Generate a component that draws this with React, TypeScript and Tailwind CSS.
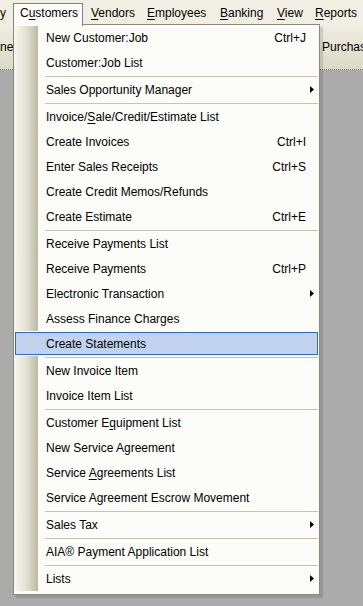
import React from 'react';

type Entry =
  | 'sep'
  | { label: React.ReactNode; shortcut?: string; sub?: boolean; active?: boolean };

const u = (s: string) => <span className="underline underline-offset-[2px]">{s}</span>;

const entries: Entry[] = [
  { label: 'New Customer:Job', shortcut: 'Ctrl+J' },
  { label: 'Customer:Job List' },
  'sep',
  { label: 'Sales Opportunity Manager', sub: true },
  'sep',
  { label: <>Invoice/{u('S')}ale/Credit/Estimate List</> },
  { label: 'Create Invoices', shortcut: 'Ctrl+I' },
  { label: 'Enter Sales Receipts', shortcut: 'Ctrl+S' },
  { label: 'Create Credit Memos/Refunds' },
  { label: 'Create Estimate', shortcut: 'Ctrl+E' },
  'sep',
  { label: 'Receive Payments List' },
  { label: 'Receive Payments', shortcut: 'Ctrl+P' },
  { label: 'Electronic Transaction', sub: true },
  { label: 'Assess Finance Charges' },
  { label: 'Create Statements', active: true },
  'sep',
  { label: 'New Invoice Item' },
  { label: 'Invoice Item List' },
  'sep',
  { label: <>Customer E{u('q')}uipment List</> },
  { label: 'New Service Agreement' },
  { label: <>Service {u('A')}greements List</> },
  { label: 'Service Agreement Escrow Movement' },
  'sep',
  { label: 'Sales Tax', sub: true },
  'sep',
  { label: 'AIA® Payment Application List' },
  'sep',
  { label: 'Lists', sub: true },
];

const strip = 'w-[24px] self-stretch shrink-0 bg-gradient-to-r from-[#f8f7f1] via-[#e4e2d3] to-[#bcb9a2]';

function Arrow() {
  return (
    <svg width="4" height="7" viewBox="0 0 4 7" className="mr-[5px] shrink-0">
      <polygon points="0,0 4,3.5 0,7" fill="#000" />
    </svg>
  );
}

function MenuRow({ entry }: { entry: Entry }) {
  if (entry === 'sep') {
    return (
      <div className="flex h-[2px]">
        <div className={strip} />
        <div className="flex-1 ml-[7px] mr-px pt-px">
          <div className="h-px bg-[#c5c2b2]" />
        </div>
      </div>
    );
  }
  if (entry.active) {
    return (
      <div className="h-[25px] px-px py-px">
        <div className="h-full flex items-center border border-[#316ac5] bg-[#c1d2ee] pl-[30px]">
          <span className="flex-1">{entry.label}</span>
        </div>
      </div>
    );
  }
  return (
    <div className="flex items-center h-[25px]">
      <div className={strip} />
      <span className="flex-1 pl-[8px] whitespace-nowrap">{entry.label}</span>
      {entry.shortcut && <span className="pr-[13px]">{entry.shortcut}</span>}
      {entry.sub && <Arrow />}
    </div>
  );
}

export default function App() {
  return (
    <div className="relative w-[363px] h-[606px] overflow-hidden bg-[#ababab] text-[12px] text-black font-['Liberation_Sans',Arial,sans-serif]">
      {/* menu bar */}
      <div className="flex h-[26px] bg-[#f1efe3] whitespace-nowrap">
        <span className="w-[13px] shrink-0 pt-[4px] overflow-hidden">y</span>
        <span className="relative z-10 shrink-0 mt-[3px] h-[23px] w-[70px] border border-b-0 border-[#85837a] bg-[#fcfcf9] pl-[6px]">
          C{u('u')}stomers
        </span>
        <span className="w-[57px] shrink-0 pl-[8px] pt-[4px]">{u('V')}endors</span>
        <span className="w-[72px] shrink-0 pl-[7px] pt-[4px]">{u('E')}mployees</span>
        <span className="w-[57px] shrink-0 pl-[8px] pt-[4px]">{u('B')}anking</span>
        <span className="w-[38px] shrink-0 pl-[8px] pt-[4px]">{u('V')}iew</span>
        <span className="w-[57px] shrink-0 pl-[8px] pt-[4px]">{u('R')}eports</span>
      </div>

      {/* toolbar */}
      <div className="flex h-[44px] pt-[12px] whitespace-nowrap bg-gradient-to-b from-[#efede1] to-[#dcd9c7] border-b border-dotted border-[#3a5fd0]">
        <span className="w-[322px] shrink-0">ner</span>
        <span className="shrink-0">Purchase</span>
      </div>

      {/* Customers dropdown */}
      <div className="absolute left-[13px] top-[24px] w-[307px] border border-[#8a877c] bg-[#fcfcf9] pb-[3px] shadow-[3px_3px_1px_rgba(0,0,0,0.12)]">
        {entries.map((e, i) => (
          <MenuRow key={i} entry={e} />
        ))}
      </div>
    </div>
  );
}
